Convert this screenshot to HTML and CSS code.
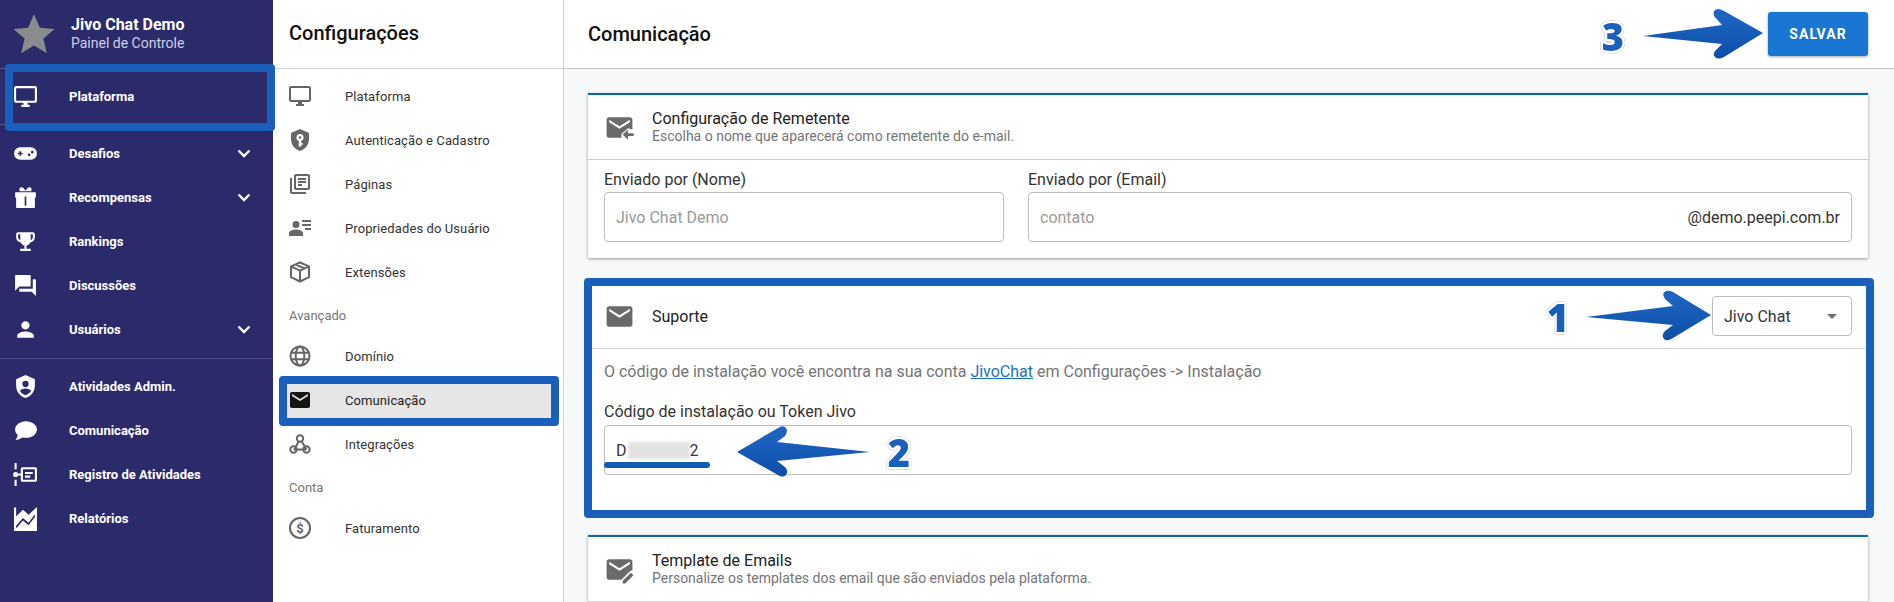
FILE: index.html
```html
<!DOCTYPE html>
<html lang="pt-BR">
<head>
<meta charset="utf-8">
<title>Comunicação</title>
<link rel="stylesheet" href="styles.css">
</head>
<body>
<svg class="sprite" xmlns="http://www.w3.org/2000/svg">
  <symbol id="i-star" viewBox="0 0 24 24"><path d="M12 1.200l3.200 7.400 8 .7-6.100 5.300 1.900 7.900L12 18.300l-7 4.200 1.900-7.900L.8 9.300l8-.7z"/></symbol>
  <symbol id="i-desktop" viewBox="0 0 24 24"><path d="M21 2H3c-1.100 0-2 .9-2 2v12c0 1.100.9 2 2 2h7v2H8v2h8v-2h-2v-2h7c1.100 0 2-.9 2-2V4c0-1.100-.9-2-2-2zm0 14H3V4h18v12z"/></symbol>
  <symbol id="i-game" viewBox="0 0 24 24"><path fill-rule="evenodd" d="M7 6h10a6 6 0 0 1 0 12H7A6 6 0 0 1 7 6zm-.8 3.800v1.400H4.800v1.600h1.400v1.400h1.600v-1.400h1.400v-1.600H7.800V9.800zM15.500 12a1.300 1.300 0 1 0 0 2.600 1.300 1.300 0 0 0 0-2.600zm3-2.600a1.300 1.300 0 1 0 0 2.600 1.300 1.300 0 0 0 0-2.600z"/></symbol>
  <symbol id="i-gift" viewBox="0 0 24 24"><path fill-rule="evenodd" d="M3 7h18c.6 0 1 .4 1 1v4h-1v9c0 .6-.4 1-1 1H4c-.6 0-1-.4-1-1v-9H2V8c0-.6.4-1 1-1zm8.200 4v9h1.600v-9z"/><path d="M6.500 6C5 3 8 1.200 10 2.800L12 5.200l2-2.400C16 1.200 19 3 17.500 6z"/></symbol>
  <symbol id="i-trophy" viewBox="0 0 24 24"><path d="M19 3H5c-1.100 0-2 .9-2 2v3c0 2.550 1.920 4.630 4.390 4.940.63 1.500 1.980 2.630 3.610 2.960V19H7v2h10v-2h-4v-3.100c1.630-.33 2.980-1.460 3.610-2.960C19.080 12.630 21 10.550 21 8V5c0-1.100-.9-2-2-2zM5 8V5h2v5.820C5.840 10.400 5 9.300 5 8zm14 0c0 1.300-.84 2.400-2 2.820V5h2v3z"/></symbol>
  <symbol id="i-forum" viewBox="0 0 24 24"><path fill-rule="evenodd" d="M3 2h13c.6 0 1 .4 1 1v9c0 .6-.4 1-1 1H6l-4 4V3c0-.6.4-1 1-1zm18 4h-2v9H6v2c0 .6.4 1 1 1h11l4 4V7c0-.6-.4-1-1-1z"/></symbol>
  <symbol id="i-person" viewBox="0 0 24 24"><path d="M12 12c2.210 0 4-1.790 4-4s-1.790-4-4-4-4 1.790-4 4 1.790 4 4 4zm0 2c-2.670 0-8 1.340-8 4v2h16v-2c0-2.660-5.330-4-8-4z"/></symbol>
  <symbol id="i-admin" viewBox="0 0 24 24"><path fill-rule="evenodd" d="M12 1L3 5v6c0 5.550 3.840 10.740 9 12 5.160-1.260 9-6.450 9-12V5l-9-4zm0 5.500a3 3 0 1 1 0 6 3 3 0 0 1 0-6zm0 7.500c2.300 0 5 1 5.300 2.300-1.200 1.900-3.100 3.400-5.300 4.100-2.200-.7-4.100-2.200-5.300-4.100.3-1.300 3-2.300 5.300-2.300z"/></symbol>
  <symbol id="i-chat" viewBox="0 0 24 24"><path d="M12.500 3C6.700 3 2 6.600 2 11c0 2 .9 3.800 2.500 5.200-.2 1.700-1 3.400-2 4.800 2.400 0 4.700-.9 6.200-2.200 1.200.2 2.500.2 3.800.2C18.300 19 23 15.400 23 11s-4.700-8-10.500-8z"/></symbol>
  <symbol id="i-log" viewBox="0 0 24 24"><path fill-rule="evenodd" d="M1.500 1h2v6h-2zm0 16h2v6h-2zM2.500 9.500a2.500 2.500 0 1 1 0 5 2.500 2.500 0 0 1 0-5zM9 5h12.500c.8 0 1.500.7 1.500 1.500v11c0 .8-.7 1.500-1.500 1.500H9c-.8 0-1.500-.7-1.500-1.500V13H5v-2h2.500V6.500C7.500 5.700 8.200 5 9 5zm.5 2v10H21V7zm2 2.500h7.500v2h-7.500zm0 3.500h5v2h-5z"/></symbol>
  <symbol id="i-chart" viewBox="0 0 24 24"><path fill-rule="evenodd" d="M1 1.500h2v8.500L9.500 3.500 15 8.500 23 1v23H1zm2 17.500v2.500l6.500-7.500 5.500 4.500 6-8V8l-6 8-5.500-4.500z"/></symbol>
  <symbol id="i-key" viewBox="0 0 24 24"><path fill-rule="evenodd" d="M12 1L3 5v6c0 5.550 3.840 10.740 9 12 5.160-1.260 9-6.450 9-12V5l-9-4zm0 5a3.500 3.500 0 0 1 1.200 6.800V15h1.500v1.800h-1.500V18.500h-2.400v-5.700A3.500 3.500 0 0 1 12 6zm0 2.200a1.300 1.300 0 1 0 0 2.600 1.300 1.300 0 0 0 0-2.600z"/></symbol>
  <symbol id="i-books" viewBox="0 0 24 24"><path d="M4 6H2v14c0 1.100.9 2 2 2h14v-2H4V6zm16-4H8c-1.100 0-2 .9-2 2v12c0 1.100.9 2 2 2h12c1.100 0 2-.9 2-2V4c0-1.100-.9-2-2-2zm0 14H8V4h12v12zM10 9h8v2h-8zm0 3h4v2h-4zm0-6h8v2h-8z"/></symbol>
  <symbol id="i-props" viewBox="0 0 24 24"><path d="M8 12a3.500 3.500 0 1 0 0-7 3.500 3.500 0 0 0 0 7zm0 1.500c-2.800 0-7 1.300-7 3.700V20h14v-2.800c0-2.400-4.200-3.700-7-3.700zM14 4h9v2h-9zm0 4h9v2h-9zm3 4h6v2h-6z"/></symbol>
  <symbol id="i-box" viewBox="0 0 24 24"><path class="ln" d="M12 2.500l9 3.800v10.900L12 21.500l-9-4.300V6.300zM3 6.300l9 4.300 9-4.300M12 10.600v10.900M7.500 4.400l9 4.100"/></symbol>
  <symbol id="i-globe" viewBox="0 0 24 24"><g class="ln"><circle cx="12" cy="12" r="9.500"/><ellipse cx="12" cy="12" rx="4.300" ry="9.500"/><path d="M2.800 8.800h18.400M2.800 15.200h18.400"/></g></symbol>
  <symbol id="i-mail" viewBox="0 0 24 24"><path d="M20 4H4c-1.100 0-1.990.9-1.990 2L2 18c0 1.100.9 2 2 2h16c1.100 0 2-.9 2-2V6c0-1.100-.9-2-2-2zm0 4l-8 5-8-5V6l8 5 8-5v2z"/></symbol>
  <symbol id="i-hook" viewBox="0 0 24 24"><g class="ln"><circle cx="12" cy="6.500" r="3.200"/><circle cx="5.500" cy="17.500" r="3.200"/><circle cx="18.500" cy="17.500" r="3.200"/><path d="M10.500 9.500l-4 8M5.500 17.500h13M13.800 9.500l4.700 8"/></g></symbol>
  <symbol id="i-inbox" viewBox="0 0 24 24"><path d="M20 4H4c-1.100 0-2 .9-2 2v12c0 1.100.9 2 2 2h9.500v-3l5-4.500 3.500 1V6c0-1.100-.9-2-2-2zm0 4l-8 5-8-5V6l8 5 8-5v2z"/><path d="M18.500 13.500L14.500 17.500l4 4v-3H23v-2h-4.500z"/></symbol>
  <symbol id="i-tpl" viewBox="0 0 24 24"><path d="M20 4H4c-1.100 0-2 .9-2 2v12c0 1.100.9 2 2 2h9.500l7-7 1.500-.5V6c0-1.100-.9-2-2-2zm0 4l-8 5-8-5V6l8 5 8-5v2z"/><path d="M20.800 14.500l2 2-6.300 6.300h-2v-2z"/></symbol>
</svg>

<div class="app">
  <aside class="side">
    <header class="brand">
      <svg class="star"><use href="#i-star"/></svg>
      <div class="brand-text">
        <div class="brand-name">Jivo Chat Demo</div>
        <div class="brand-sub">Painel de Controle</div>
      </div>
    </header>
    <nav>
      <a class="side-item side-first"><svg class="side-ic"><use href="#i-desktop"/></svg><span>Plataforma</span></a>
      <div class="side-group">
        <a class="side-item"><svg class="side-ic"><use href="#i-game"/></svg><span>Desafios</span><svg class="chev" viewBox="0 0 14 9"><path d="M1.500 1.500L7 7l5.500-5.500"/></svg></a>
        <a class="side-item"><svg class="side-ic"><use href="#i-gift"/></svg><span>Recompensas</span><svg class="chev" viewBox="0 0 14 9"><path d="M1.500 1.500L7 7l5.500-5.500"/></svg></a>
        <a class="side-item"><svg class="side-ic"><use href="#i-trophy"/></svg><span>Rankings</span></a>
        <a class="side-item"><svg class="side-ic"><use href="#i-forum"/></svg><span>Discussões</span></a>
        <a class="side-item"><svg class="side-ic"><use href="#i-person"/></svg><span>Usuários</span><svg class="chev" viewBox="0 0 14 9"><path d="M1.500 1.500L7 7l5.500-5.500"/></svg></a>
      </div>
      <div class="side-group side-last">
        <a class="side-item"><svg class="side-ic"><use href="#i-admin"/></svg><span>Atividades Admin.</span></a>
        <a class="side-item"><svg class="side-ic"><use href="#i-chat"/></svg><span>Comunicação</span></a>
        <a class="side-item"><svg class="side-ic"><use href="#i-log"/></svg><span>Registro de Atividades</span></a>
        <a class="side-item"><svg class="side-ic"><use href="#i-chart"/></svg><span>Relatórios</span></a>
      </div>
    </nav>
  </aside>

  <section class="settings">
    <h2 class="settings-title">Configurações</h2>
    <div class="settings-list">
      <a class="set-item"><svg class="set-ic"><use href="#i-desktop"/></svg><span>Plataforma</span></a>
      <a class="set-item"><svg class="set-ic"><use href="#i-key"/></svg><span>Autenticação e Cadastro</span></a>
      <a class="set-item"><svg class="set-ic"><use href="#i-books"/></svg><span>Páginas</span></a>
      <a class="set-item"><svg class="set-ic"><use href="#i-props"/></svg><span>Propriedades do Usuário</span></a>
      <a class="set-item"><svg class="set-ic"><use href="#i-box"/></svg><span>Extensões</span></a>
      <div class="set-label">Avançado</div>
      <a class="set-item"><svg class="set-ic"><use href="#i-globe"/></svg><span>Domínio</span></a>
      <a class="set-item set-active"><svg class="set-ic"><use href="#i-mail"/></svg><span>Comunicação</span></a>
      <a class="set-item"><svg class="set-ic"><use href="#i-hook"/></svg><span>Integrações</span></a>
      <div class="set-label">Conta</div>
      <a class="set-item"><svg class="set-ic" viewBox="0 0 24 24"><circle class="ln" cx="12" cy="12" r="10"/><text class="dollar" x="12" y="16.500">$</text></svg><span>Faturamento</span></a>
    </div>
  </section>

  <main class="main">
    <header class="topbar">
      <h1 class="page-title">Comunicação</h1>
      <button class="save">SALVAR</button>
    </header>
    <div class="content">
      <section class="card">
        <div class="card-head">
          <svg class="card-ic"><use href="#i-inbox"/></svg>
          <div class="card-heading">
            <div class="card-title">Configuração de Remetente</div>
            <div class="card-sub">Escolha o nome que aparecerá como remetente do e-mail.</div>
          </div>
        </div>
        <div class="card-body sender">
          <div class="field">
            <label class="field-label">Enviado por (Nome)</label>
            <div class="input placeholder">Jivo Chat Demo</div>
          </div>
          <div class="field">
            <label class="field-label">Enviado por (Email)</label>
            <div class="input placeholder input-split"><span>contato</span><span class="suffix">@demo.peepi.com.br</span></div>
          </div>
        </div>
      </section>

      <section class="card card-support">
        <div class="card-head">
          <svg class="card-ic"><use href="#i-mail"/></svg>
          <div class="card-heading"><div class="card-title">Suporte</div></div>
          <div class="select"><span>Jivo Chat</span><i class="caret"></i></div>
        </div>
        <div class="card-body">
          <p class="hint">O código de instalação você encontra na sua conta <a class="link">JivoChat</a> em Configurações -&gt; Instalação</p>
          <label class="field-label">Código de instalação ou Token Jivo</label>
          <div class="input token"><span>D</span><span class="redact"></span><span>2</span></div>
        </div>
      </section>

      <section class="card">
        <div class="card-head">
          <svg class="card-ic"><use href="#i-tpl"/></svg>
          <div class="card-heading">
            <div class="card-title">Template de Emails</div>
            <div class="card-sub">Personalize os templates dos email que são enviados pela plataforma.</div>
          </div>
        </div>
      </section>
    </div>
  </main>
</div>

<div class="mark mark-plat"></div>
<div class="mark mark-com"></div>
<div class="mark mark-sup"></div>
<svg class="notes" viewBox="0 0 1894 602" xmlns="http://www.w3.org/2000/svg">
  <defs>
    <linearGradient id="arrow-fill" x1="0" y1="0" x2="0" y2="1">
      <stop offset="0" stop-color="#1f66c4"/>
      <stop offset="1" stop-color="#0d4fa8"/>
    </linearGradient>
  </defs>
  <path class="arrow" d="M1643 36L1722 25L1714 16Q1712 10 1718 9Q1720 9 1724 11L1763 33L1724 57Q1718 60 1715 57Q1712 54 1716 50L1722 44z"/>
  <path class="arrow" d="M1586 317L1673 306L1665 299Q1661 293 1666 291Q1669 290 1673 292L1711 315L1673 338Q1667 342 1664 339Q1661 335 1665 331L1673 325z"/>
  <path class="arrow" d="M870 452L777 442L785 436Q789 430 785 427Q782 425 778 428L737 452L778 475Q783 478 786 475Q789 471 785 467L777 461z"/>
  <rect class="underline" x="604" y="462" width="106" height="6" rx="3"/>
  <text class="num" x="1613" y="51">3</text>
  <text class="num" x="1558" y="332">1</text>
  <text class="num" x="899" y="467">2</text>
</svg>
</body>
</html>
```

FILE: styles.css
```css
* { box-sizing: border-box; }
html, body { margin: 0; height: 100%; overflow: hidden; }
body { font-family: Roboto, "Liberation Sans", sans-serif; color: #333; background: #fff; position: relative; }
.sprite { position: absolute; width: 0; height: 0; }
.ln { fill: none; stroke: currentColor; stroke-width: 2; stroke-linejoin: round; }
.dollar { font: 700 13px Roboto, sans-serif; text-anchor: middle; fill: currentColor; }

.app { display: flex; height: 602px; }

/* dark sidebar */
.side { width: 273px; flex: none; background: #2b2a6b; color: #fff; }
.brand { height: 68px; display: flex; align-items: center; padding-left: 12px; gap: 15px; }
.star { width: 44px; height: 44px; fill: #8a8b8d; flex: none; }
.brand-name { font-size: 16px; font-weight: 700; line-height: 19px; }
.brand-sub { font-size: 14px; line-height: 19px; color: #cfd0e6; }
.side-item { display: flex; align-items: center; height: 44px; padding-left: 13px; font-size: 13px; font-weight: 700; }
.side-first { height: 57px; border-top: 1px solid #55558f; border-bottom: 1px solid #55558f; }
.side-ic { width: 25px; height: 25px; fill: #fff; flex: none; margin-right: 31px; }
.chev { width: 14px; height: 9px; margin-left: auto; margin-right: 22px; fill: none; stroke: #fff; stroke-width: 2.4; }
.side-group { padding: 6px 0 7px; }
.side-last { border-top: 1px solid #4d4d8a; padding-top: 5px; }

/* settings column */
.settings { width: 291px; flex: none; background: #fff; border-right: 1px solid #d0d0d0; }
.settings-title { margin: 0; height: 69px; border-bottom: 1px solid #d0d0d0; padding-left: 16px; font-size: 20px; font-weight: 500; line-height: 66px; color: #111; }
.settings-list { padding-top: 5px; }
.set-item { display: flex; align-items: center; height: 44px; padding-left: 15px; font-size: 13px; letter-spacing: .1px; color: #333; }
.set-ic { width: 24px; height: 24px; flex: none; fill: #666; color: #666; margin-right: 33px; }
.set-label { height: 40px; padding-top: 4px; padding-left: 16px; font-size: 13px; line-height: 36px; color: #757575; }
.set-active { color: #222; background: linear-gradient(#e6e6e6, #e6e6e6) center / 270px 40px no-repeat; }
.set-active .set-ic { fill: #151515; }

/* main */
.main { flex: 1; min-width: 0; background: #f7f8fa; }
.topbar { height: 69px; background: #fff; border-bottom: 1px solid #c8c8c8; display: flex; align-items: center; justify-content: space-between; padding: 0 26px 1px 24px; }
.page-title { margin: 0; font-size: 20px; font-weight: 500; color: #111; }
.save { width: 100px; height: 44px; border: 0; border-radius: 3px; background: #1976d2; color: #fff; font: 700 14px Roboto, sans-serif; letter-spacing: 1px; box-shadow: 0 1px 3px rgba(0,0,0,.35); }
.content { padding: 24px 26px 0 24px; display: flex; flex-direction: column; gap: 24px; }
.card { background: #fff; border-top: 2px solid #0a66ae; box-shadow: 0 1px 3px rgba(0,0,0,.4); }
.card-head { height: 65px; display: flex; align-items: center; padding: 0 16px; border-bottom: 1px solid #d0d0d0; }
.card-ic { width: 31px; height: 31px; flex: none; fill: #6a6a6a; margin-right: 17px; }
.card-title { font-size: 16px; line-height: 19px; color: #222; }
.card-sub { font-size: 14px; line-height: 17px; color: #757575; }
.card-body { padding: 12px 16px 16px; }
.sender { display: grid; grid-template-columns: 400px 1fr; gap: 24px; padding-top: 9px; }
.field-label { display: block; font-size: 16px; line-height: 22px; color: #333; margin-bottom: 1px; }
.input { height: 50px; border: 1px solid #bdbdbd; border-radius: 4px; background: #fff; display: flex; align-items: center; padding: 0 11px; font-size: 16px; color: #333; }
.placeholder { color: #9a9a9a; }
.input-split { justify-content: space-between; }
.suffix { color: #333; }
.select { margin-left: auto; width: 140px; height: 40px; border: 1px solid #bdbdbd; border-radius: 4px; display: flex; align-items: center; justify-content: space-between; padding: 0 14px 0 11px; font-size: 16px; color: #333; }
.caret { width: 0; height: 0; border-left: 5px solid transparent; border-right: 5px solid transparent; border-top: 5px solid #6e6e6e; }
.hint { margin: 0 0 17px; font-size: 16px; line-height: 24px; color: #757575; }
.link { color: #1a73c0; text-decoration: underline; }
.card-support .card-body { padding-top: 11px; height: 162px; }
.token { margin-top: 2px; }
.redact { width: 62px; height: 17px; background: #e2e2e2; filter: blur(1.5px); margin-left: 1px; }

/* annotations laid over the screenshot */
.mark { position: absolute; border: 8px solid #1b5fbd; border-radius: 4px; }
.mark-plat { left: 5px; top: 64px; width: 270px; height: 67px; }
.mark-com { left: 279px; top: 376px; width: 280px; height: 50px; }
.mark-sup { left: 584px; top: 278px; width: 1290px; height: 240px; }
.notes { position: absolute; left: 0; top: 0; width: 1894px; height: 602px; pointer-events: none; }
.arrow { fill: url(#arrow-fill); }
.underline { fill: #0f5bb5; }
.num { font: 800 38px "Open Sans", sans-serif; text-anchor: middle; fill: #1b5fbd; stroke: #fff; stroke-width: 5px; paint-order: stroke; stroke-linejoin: round; filter: drop-shadow(0 0 .6px #777); }
```
